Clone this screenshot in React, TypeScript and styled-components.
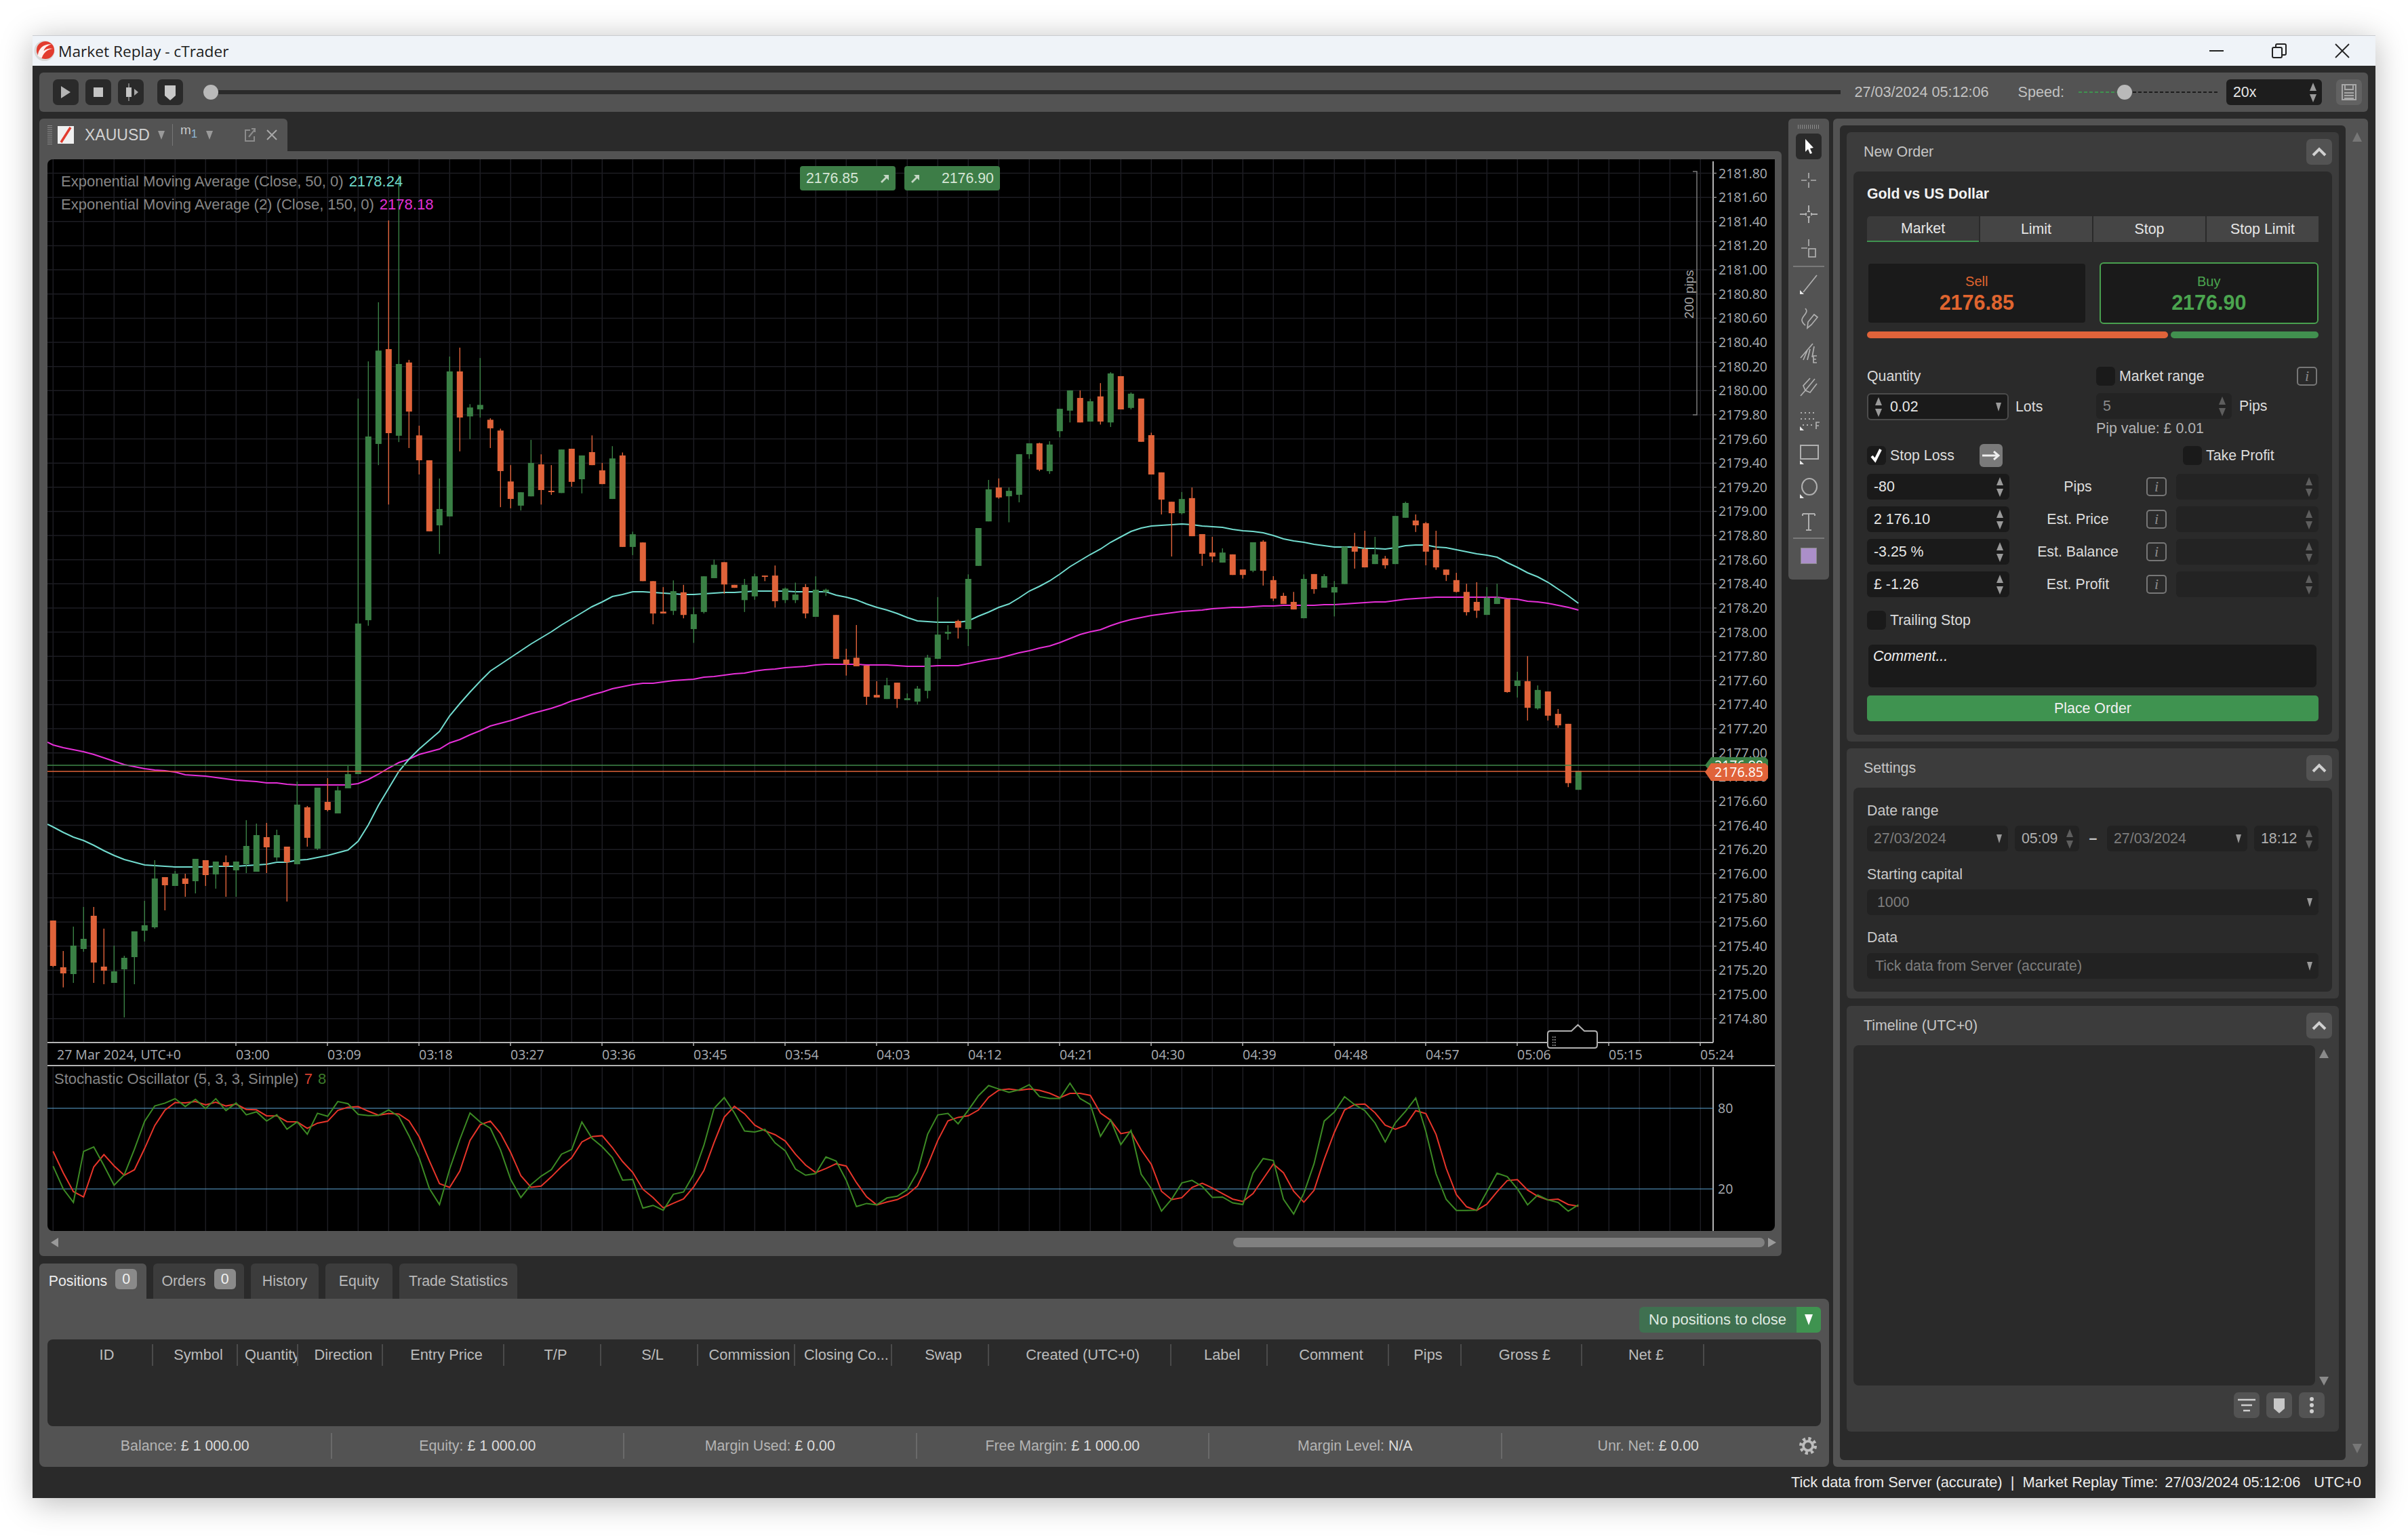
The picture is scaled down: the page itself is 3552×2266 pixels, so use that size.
import * as React from 'react';
import styled, { createGlobalStyle } from 'styled-components';

type Row = [number, number, number, number, number];

// up(1)/down(0), wick top, body top, body bottom, wick bottom, read off the chart at three scales
const rowsA: Row[] = [
  [0,774,774,975,980],[0,909,981,1008,1070],[1,801,885,1011,1050],[1,714,855,900,912],[0,714,753,960,1050],
  [0,810,978,996,1056],[1,885,999,1050,1050],[1,930,939,990,1203],[1,822,822,936,1056],[1,687,795,819,867],
  [1,507,588,804,810],[0,582,582,618,729],[1,555,567,621,621],[0,567,588,612,669],[1,501,501,600,654],
  [0,507,507,573,621],[1,513,513,570,633],[0,486,516,534,669],[1,513,513,552,669],[1,330,444,525,564],
  [1,345,396,558,558],[0,342,405,450,564],[1,372,396,495,510],[0,447,447,516,690],[1,159,261,525,525],
  [0,267,273,408,447],[1,186,186,456,462],[0,144,249,285,291],[1,180,198,300,300],[1,90,126,189,189],
];
const rowsB: Row[] = [
  [1,525,1130,1535,1535],[1,425,627,1121,1136],[1,266,396,647,704],[0,46,392,618,810],[1,-77,432,625,642],
  [0,421,428,560,658],[0,598,624,691,729],[0,691,691,882,882],[1,740,822,866,943],[1,412,452,842,842],
  [0,388,452,576,667],[1,540,549,573,634],[1,416,542,554,576],[0,578,582,605,658],[0,606,611,720,817],
  [0,704,748,795,820],[1,777,777,813,826],[1,636,698,788,788],[0,675,702,771,810],[0,704,773,776,784],
  [1,662,662,779,779],[0,660,660,749,762],[1,678,678,742,780],[0,624,669,704,704],[0,698,718,755,755],
  [1,653,686,795,795],[0,670,678,924,924],[1,883,890,924,946],[0,912,912,1016,1016],[0,1016,1016,1103,1132],
  [0,1032,1098,1103,1103],[1,1014,1043,1096,1107],[0,1026,1046,1107,1116],[1,1086,1105,1145,1182],[1,1003,1003,1099,1103],
  [1,958,972,1008,1008],[0,965,965,1025,1050],[0,1026,1026,1034,1034],[1,1010,1026,1067,1099],[1,996,1003,1057,1066],
  [0,1001,1001,1003,1016],[0,974,1001,1070,1087],[1,1033,1036,1067,1075],[1,1020,1052,1067,1075],[0,1024,1032,1103,1116],
  [1,1003,1039,1112,1112],[1,1036,1039,1045,1056],[0,1107,1107,1225,1225],[0,1198,1227,1240,1270],[0,1134,1222,1245,1245],
  [0,1243,1243,1327,1349],[0,1285,1322,1329,1329],[1,1276,1296,1333,1333],[0,1289,1289,1333,1357],[1,1318,1331,1336,1336],
  [1,1298,1305,1340,1348],
];
const rowsC: Row[] = [
  [1,1044,1053,1163,1188],[1,853,977,1057,1057],[1,946,968,974,994],[0,928,932,954,990],[1,778,793,959,1015],
  [1,625,625,750,750],[1,466,497,603,603],[0,461,491,524,528],[1,491,502,520,606],[1,381,381,515,540],
  [1,345,345,381,396],[0,343,345,432,437],[1,338,349,437,446],[1,231,231,305,325],[1,170,170,237,276],
  [0,170,195,276,276],[1,198,206,273,273],[0,146,190,273,283],[1,110,114,276,291],[0,123,123,233,233],
  [1,177,181,228,233],[0,197,197,340,340],[0,310,318,448,448],[0,441,441,531,580],[0,538,538,576,719],
  [1,506,529,576,580],[0,491,526,652,652],[0,645,645,710,750],[0,654,706,719,738],[1,692,706,739,739],
  [0,712,712,780,780],[0,762,762,780,792],[1,672,672,766,771],[0,665,670,766,815],[0,784,797,858,866],
  [0,839,849,876,876],[0,836,869,894,894],[1,778,793,923,923],[0,777,777,827,842],[1,777,784,822,822],
  [1,800,820,838,917],[1,687,687,810,810],[0,641,686,703,759],[0,634,694,755,755],[1,654,712,744,744],
  [0,717,726,748,759],[1,585,585,744,744],[1,538,542,591,591],[0,580,600,616,638],[0,605,609,703,748],
  [0,634,697,755,763],[0,762,762,780,800],[0,773,797,836,838],[0,809,836,903,914],[0,804,869,898,922],
  [1,820,855,912,912],[1,809,855,876,876],[0,860,860,1167,1169],[1,1100,1129,1147,1185],[0,1048,1131,1219,1261],
  [1,1145,1160,1221,1225],[0,1165,1165,1245,1261],[0,1223,1239,1277,1285],[0,1272,1272,1468,1481],[1,1427,1427,1490,1490],
];

const toPage = (rows: Row[], y0: number, k: number) =>
  rows.map(([up, high, top, bottom, low]) => ({
    up: up === 1,
    high: y0 + high / k,
    top: y0 + top / k,
    bottom: y0 + bottom / k,
    low: y0 + low / k,
  }));

const candles = [...toPage(rowsA, 1100, 3), ...toPage(rowsB, 300, 1.823), ...toPage(rowsC, 500, 2.24)];
const candleX = (i: number) => 78.3 + i * 15;

const ema50 = [
  1220,1228,1235,1240,1247,1255,1262,1268,1272,1276,1277,1278,1279,1279,1279,1279,1278,1278,1278,1277,1276,1275,1272,1272,1269,1268,1265,1262,1258,1254,
  1241,1217,1188,1163,1138,1120,1105,1092,1079,1056,1038,1021,1005,990,980,970,960,950,941,932,922,913,904,895,888,880,877,873,873,874,
  875,876,877,877,876,875,874,874,873,872,872,872,872,873,873,873,873,878,881,885,891,896,900,905,911,916,917,918,918,918,
  916,909,903,896,891,882,872,865,857,847,836,827,818,810,800,792,784,779,776,775,774,773,774,776,777,778,781,783,784,786,
  790,795,798,800,803,805,807,807,807,809,809,810,808,805,804,804,807,808,811,814,817,819,822,830,837,845,851,859,869,879,890,
];
const ema150 = [
  1099,1103,1106,1109,1113,1118,1123,1128,1131,1134,1136,1137,1139,1143,1144,1145,1147,1149,1151,1152,1153,1155,1155,1157,1158,1158,1158,1158,1158,1158,
  1156,1150,1142,1133,1125,1120,1113,1109,1105,1096,1091,1084,1078,1071,1067,1063,1058,1053,1049,1045,1040,1034,1030,1025,1021,1016,1013,1010,1008,1008,
  1006,1004,1003,1002,999,998,996,994,993,990,988,987,985,984,983,981,980,980,980,980,981,981,981,982,983,983,983,982,982,982,
  979,976,973,971,967,963,960,956,953,948,942,936,932,929,923,918,914,911,908,906,904,902,901,900,898,897,896,896,895,894,
  894,893,893,893,893,892,892,891,890,889,888,888,886,884,883,882,881,881,881,881,881,881,881,883,884,887,888,890,893,896,900,
];

const polyline = (ys: number[], startX?: number) => {
  const pts = ys.map((y, i) => `${candleX(i)},${y.toFixed(1)}`);
  if (startX !== undefined) pts.unshift(`${startX},${(ys[0] - 4).toFixed(1)}`);
  return pts.join(' ');
};

const sma = (v: number[], n: number) =>
  v.map((_, i) => {
    const part = v.slice(Math.max(0, i - n + 1), i + 1);
    return part.reduce((a, b) => a + b, 0) / part.length;
  });

// Stochastic (5, 3, 3), on screen y, so highest price is the smallest y
const rawK = candles.map((c, i) => {
  const win = candles.slice(Math.max(0, i - 4), i + 1);
  const top = Math.min(...win.map((w) => w.high));
  const bot = Math.max(...win.map((w) => w.low));
  const close = c.up ? c.top : c.bottom;
  return bot === top ? 50 : ((bot - close) / (bot - top)) * 100;
});
// the bars before the first visible one are not on screen, so the first values are set by hand
const stochK = sma(rawK, 3).map((v, i) => [37, 20, 10][i] ?? v);
const stochD = sma(stochK, 3).map((v, i) => [48, 32, 18, 14][i] ?? v);
const stochY = (v: number) => 1754 - ((v - 20) * 119) / 60;

const priceY = (p: number) => 255.6 + ((2181.8 - p) / 0.2) * 35.63;
const priceLevels = Array.from({ length: 36 }, (_, i) => 2181.8 - i * 0.2);
const gridX = Array.from({ length: 55 }, (_, i) => 78.3 + i * 45);
const timeLabels = ['03:00','03:09','03:18','03:27','03:36','03:45','03:54','04:03','04:12','04:21','04:30','04:39','04:48','04:57','05:06','05:15','05:24'];

const GlobalStyle = createGlobalStyle`
  html, body {
    margin: 0;
    padding: 0;
    background: #fff;
  }
  * {
    box-sizing: border-box;
  }
`;

const Page = styled.div`
  width: 3552px;
  height: 2266px;
  padding: 52px 48px 56px;
  overflow: hidden;
  background: #fff;
  font-family: 'Liberation Sans', Arial, sans-serif;
  font-size: 21.33px;
  color: #d8d8d8;
`;

const Window = styled.div`
  width: 3456px;
  height: 2158px;
  display: flex;
  flex-direction: column;
  background: #2a2a2a;
  box-shadow: 0 6px 44px rgba(0, 0, 0, 0.28);
`;

const TitleBar = styled.div`
  height: 45px;
  flex: none;
  display: flex;
  align-items: center;
  padding-left: 2px;
  background: #eff3f8;
  border-top: 1px solid #c9cbd0;
`;

const AppTitle = styled.span`
  margin-left: 4px;
  font-family: 'Open Sans', sans-serif;
  font-size: 22.7px;
  color: #1c1c1c;
`;

const WinControls = styled.div`
  margin-left: auto;
  display: flex;
  align-items: center;
  gap: 71px;
  padding-right: 38px;
`;

const Workspace = styled.div`
  height: 2067px;
  flex: none;
  display: flex;
  flex-direction: column;
  gap: 10px;
  padding: 10px 11px 0 10px;
`;

const ReplayBar = styled.div`
  height: 58px;
  flex: none;
  display: flex;
  align-items: center;
  padding: 0 9px 0 20px;
  background: #535353;
  border-radius: 6px;
`;

const IconButton = styled.div<{ $gapLeft?: number; $bg?: string }>`
  width: 38px;
  height: 38px;
  flex: none;
  display: flex;
  align-items: center;
  justify-content: center;
  margin-left: ${(p) => p.$gapLeft ?? 0}px;
  background: ${(p) => p.$bg ?? '#2a2a2a'};
  border-radius: 7px;
`;

const SeekTrack = styled.div`
  position: relative;
  flex: 1;
  height: 6px;
  margin-left: 30px;
  background: #2a2a2a;
`;

const SliderThumb = styled.span<{ $left: number }>`
  position: absolute;
  top: 50%;
  left: ${(p) => p.$left}px;
  width: 22px;
  height: 22px;
  margin-top: -11px;
  border-radius: 50%;
  background: #b9b9b9;
`;

const BarText = styled.span<{ $gapLeft: number }>`
  margin-left: ${(p) => p.$gapLeft}px;
  font-size: 21.6px;
  color: #c2c2c2;
  white-space: nowrap;
`;

const SpeedTrack = styled.div`
  position: relative;
  width: 207px;
  height: 2px;
  margin: 0 11px 0 21px;
  background: repeating-linear-gradient(90deg, #1d1d1d 0 5px, transparent 5px 8px);
`;

const SpeedFill = styled.span`
  position: absolute;
  left: 0;
  top: 0;
  width: 66px;
  height: 2px;
  background: repeating-linear-gradient(90deg, #3f9350 0 5px, transparent 5px 8px);
`;

const SpeedField = styled.div`
  width: 141px;
  height: 38px;
  display: flex;
  align-items: center;
  justify-content: space-between;
  padding: 0 8px 0 10px;
  background: #1d1d1d;
  border-radius: 6px;
  color: #e8e8e8;
`;

const MainRow = styled.div`
  height: 1989px;
  display: flex;
  gap: 6px;
`;

const LeftColumn = styled.div`
  width: 2640px;
  display: flex;
  flex-direction: column;
  gap: 11px;
`;

const ChartRow = styled.div`
  height: 1678px;
  flex: none;
  display: flex;
  gap: 10px;
`;

const ChartColumn = styled.div`
  width: 2570px;
  display: flex;
  flex-direction: column;
`;

const ChartTab = styled.div`
  width: 366px;
  height: 48px;
  flex: none;
  display: flex;
  align-items: center;
  padding-left: 12px;
  background: #535353;
  border-radius: 6px 6px 0 0;
  color: #d2d2d2;
`;

const Grip = styled.span`
  width: 7px;
  height: 28px;
  margin-right: 8px;
  background: repeating-linear-gradient(0deg, #8a8a8a 0 1px, transparent 1px 3px);
`;

const SymbolName = styled.span`
  margin-left: 16px;
  width: 108px;
  font-size: 23px;
`;

const TabSep = styled.span`
  width: 1px;
  height: 32px;
  margin: 0 11px 0 11px;
  background: #777;
`;

const Period = styled.span`
  width: 38px;
  font-size: 19px;
  line-height: 20px;
  color: #c8c8c8;
  transform: translateY(-4px);
`;

const PeriodSub = styled.sub`
  font-size: 17px;
  color: #8fb7d8;
`;

const TabAction = styled.svg<{ $left: number }>`
  margin-left: ${(p) => p.$left}px;
  flex: none;
`;

const ChartPanel = styled.div`
  flex: 1;
  display: flex;
  flex-direction: column;
  padding: 12px 10px 0 12px;
  background: #535353;
  border-radius: 0 6px 6px 6px;
`;

const ChartArea = styled.div`
  position: relative;
  height: 1581px;
  flex: none;
  background: #000;
  border-radius: 8px 0 8px 8px;
  overflow: hidden;
`;

const ChartSvg = styled.svg`
  display: block;
`;

const AxisText = styled.text`
  font-family: 'Open Sans', sans-serif;
  font-size: 19.5px;
  fill: #a9adb3;
`;

const TagText = styled.text`
  font-family: 'Open Sans', sans-serif;
  font-size: 19.5px;
  fill: #fff;
`;

const RulerText = styled.text`
  font-family: 'Liberation Sans', sans-serif;
  font-size: 19px;
  fill: #a4a4a4;
`;

const Legend = styled.div`
  position: absolute;
  left: 20px;
  top: 16px;
  line-height: 34px;
  font-size: 22px;
  color: #868686;
  white-space: nowrap;
`;

const LegendValue = styled.span<{ $color: string }>`
  margin-left: 8px;
  color: ${(p) => p.$color};
`;

const StochTitle = styled.div`
  position: absolute;
  left: 10px;
  top: 1345px;
  line-height: 24px;
  font-size: 22px;
  color: #868686;
  white-space: nowrap;
`;

const PriceBadges = styled.div`
  position: absolute;
  left: 1110px;
  top: 10px;
  display: flex;
  gap: 13px;
`;

const PriceBadge = styled.div`
  width: 141px;
  height: 36px;
  display: flex;
  align-items: center;
  justify-content: space-between;
  padding: 0 9px;
  background: #3d7d47;
  border-radius: 4px;
  color: #d6e6d6;
`;

const ScrollRow = styled.div`
  height: 37px;
  flex: none;
  display: flex;
  align-items: flex-start;
  margin-right: -2px;
  padding: 10px 0 0 5px;
`;

const ScrollThumb = styled.div`
  width: 784px;
  height: 14px;
  margin: 0 5px 0 auto;
  background: #808080;
  border-radius: 7px;
`;

const Tri = styled.span<{ $dir: 'up' | 'down' | 'left' | 'right'; $w?: number; $h?: number; $color?: string }>`
  display: inline-block;
  flex: none;
  width: 0;
  height: 0;
  border-style: solid;
  border-color: transparent;
  ${({ $dir, $w = 10, $h = 11, $color = '#9a9a9a' }) => {
    if ($dir === 'up') return `border-width: 0 ${$w / 2}px ${$h}px; border-bottom-color: ${$color};`;
    if ($dir === 'down') return `border-width: ${$h}px ${$w / 2}px 0; border-top-color: ${$color};`;
    if ($dir === 'left') return `border-width: ${$w / 2}px ${$h}px ${$w / 2}px 0; border-right-color: ${$color};`;
    return `border-width: ${$w / 2}px 0 ${$w / 2}px ${$h}px; border-left-color: ${$color};`;
  }}
`;

const SideBar = styled.div`
  width: 60px;
  height: 680px;
  flex: none;
  display: flex;
  flex-direction: column;
  align-items: center;
  padding-top: 9px;
  background: #535353;
  border-radius: 6px;
`;

const SideGrip = styled.span`
  width: 32px;
  height: 6px;
  margin-bottom: 7px;
  background: repeating-linear-gradient(90deg, #8a8a8a 0 1px, transparent 1px 3px);
`;

const ToolIcon = styled.div<{ $active?: boolean; $top?: number }>`
  width: 38px;
  height: 38px;
  flex: none;
  display: flex;
  align-items: center;
  justify-content: center;
  margin-top: ${(p) => p.$top ?? 12}px;
  background: ${(p) => (p.$active ? '#2a2a2a' : 'transparent')};
  border-radius: 6px;
`;

const ToolSep = styled.span<{ $top: number }>`
  width: 46px;
  height: 2px;
  flex: none;
  margin-top: ${(p) => p.$top}px;
  background: #7a7a7a;
`;

const ColorSwatch = styled.span`
  width: 24px;
  height: 24px;
  margin-top: 13px;
  background: #ab8fc9;
  border: 1px solid #8a8a8a;
`;

const BottomPanel = styled.div`
  flex: 1;
  display: flex;
  flex-direction: column;
`;

const BottomTabs = styled.div`
  height: 52px;
  flex: none;
  display: flex;
  gap: 10px;
`;

const BottomTab = styled.div<{ $active?: boolean; $w: number; $up?: boolean }>`
  width: ${(p) => p.$w}px;
  display: flex;
  align-items: ${(p) => (p.$up ? 'flex-start' : 'center')};
  justify-content: center;
  gap: 12px;
  padding-top: ${(p) => (p.$up ? 14 : 0)}px;
  background: ${(p) => (p.$active ? '#535353' : '#3c3c3c')};
  border-radius: 6px 6px 0 0;
  color: ${(p) => (p.$active ? '#ececec' : '#b9b9b9')};
`;

const CountBadge = styled.span`
  width: 32px;
  height: 30px;
  display: flex;
  align-items: center;
  justify-content: center;
  margin-top: -6px;
  background: #8a8a8a;
  border-radius: 6px;
  color: #f0f0f0;
`;

const BottomBody = styled.div`
  flex: 1;
  display: flex;
  flex-direction: column;
  padding-top: 12px;
  background: #535353;
  border-radius: 0 8px 8px 8px;
`;

const CloseRow = styled.div`
  height: 38px;
  flex: none;
  display: flex;
  justify-content: flex-end;
  margin: 0 12px 10px;
`;

const CloseButton = styled.div`
  width: 268px;
  display: flex;
  align-items: center;
  padding-left: 14px;
  background: #3f7050;
  border-radius: 6px;
  overflow: hidden;
  font-size: 22px;
  color: #dfe9e0;
`;

const CloseArrow = styled.span`
  width: 36px;
  height: 38px;
  display: flex;
  align-items: center;
  justify-content: center;
  margin-left: auto;
  background: #3f9350;
`;

const TableBox = styled.div`
  height: 128px;
  flex: none;
  margin: 0 12px;
  padding: 7px 0 0 21px;
  background: #2a2a2a;
  border-radius: 8px;
`;

const TableHead = styled.div`
  display: grid;
  grid-template-columns: 135px 125px 89px 125px 179px 143px 143px 143px 143px 143px 268.5px 142.5px 179px 107px 178px 180px;
  width: 2423px;
  height: 32px;
`;

const HeadCell = styled.div<{ $left?: boolean }>`
  height: 32px;
  line-height: 32px;
  overflow: hidden;
  white-space: nowrap;
  text-align: ${(p) => (p.$left ? 'left' : 'center')};
  padding-left: 10px;
  border-right: 2px solid #4a4a4a;
  font-size: 21.8px;
  color: #bcbcbc;

  &:first-child {
    padding-left: 0;
  }
`;

const StatsRow = styled.div`
  flex: 1;
  display: grid;
  grid-template-columns: repeat(6, 431.5px) 1fr;
  padding-top: 10px;
`;

const StatCell = styled.div<{ $last?: boolean }>`
  height: 38px;
  display: flex;
  align-items: center;
  justify-content: center;
  gap: 6px;
  border-right: ${(p) => (p.$last ? '0' : '2px solid #6a6a6a')};
  color: #b4b4b4;
  white-space: nowrap;
`;

const StatValue = styled.span`
  color: #dcdcdc;
`;

const GearCell = styled.div`
  height: 38px;
  display: flex;
  align-items: center;
  justify-content: center;
  padding-right: 12px;
`;

const OrderPanel = styled.div`
  width: 789px;
  display: flex;
  padding: 10px 0 10px 10px;
  background: #535353;
  border-radius: 6px;
`;

const OrderInner = styled.div`
  width: 746px;
  display: flex;
  flex-direction: column;
  gap: 10px;
  padding: 10px;
  background: #2a2a2a;
  border-radius: 6px;
`;

const OrderScroll = styled.div`
  flex: 1;
  display: flex;
  flex-direction: column;
  align-items: center;
  justify-content: space-between;
  padding: 10px 0 10px;
`;

const Section = styled.div<{ $h: number; $top?: number }>`
  height: ${(p) => p.$h}px;
  flex: none;
  display: flex;
  flex-direction: column;
  margin-top: ${(p) => p.$top ?? 0}px;
  background: #3c3c3c;
  border-radius: 6px;
`;

const SectionHead = styled.div`
  height: 58px;
  flex: none;
  display: flex;
  align-items: center;
  justify-content: space-between;
  padding: 0 10px 0 25px;
  color: #c6c6c6;
`;

const Collapse = styled.div`
  width: 38px;
  height: 38px;
  display: flex;
  align-items: center;
  justify-content: center;
  background: #535353;
  border-radius: 7px;
`;

const Card = styled.div`
  flex: 1;
  margin: 0 10px 10px;
  padding: 0 20px;
  background: #2a2a2a;
  border-radius: 8px;
`;

const CardTitle = styled.div`
  height: 66px;
  line-height: 66px;
  font-weight: 700;
  color: #f2f2f2;
`;

const OrderTabs = styled.div`
  display: grid;
  grid-template-columns: repeat(4, 1fr);
  gap: 2px;
  height: 38px;
`;

const OrderTab = styled.div<{ $active?: boolean }>`
  display: flex;
  align-items: center;
  justify-content: center;
  background: ${(p) => (p.$active ? '#3a3a3a' : '#454545')};
  border-bottom: ${(p) => (p.$active ? '2px solid #3f9350' : '0')};
  border-radius: ${(p) => (p.$active ? '5px 0 0 0' : '0')};
  color: #e6e6e6;
`;

const PriceRow = styled.div`
  display: grid;
  grid-template-columns: 1fr 1fr;
  gap: 19px;
  height: 91px;
  margin-top: 30px;
`;

const PriceBox = styled.div<{ $color: string; $selected?: boolean }>`
  display: flex;
  flex-direction: column;
  align-items: center;
  justify-content: center;
  background: #1a1a1a;
  background-clip: padding-box;
  border: 2px solid ${(p) => (p.$selected ? '#49a04f' : 'transparent')};
  border-radius: 6px;
  color: ${(p) => p.$color};
`;

const PriceCaption = styled.span`
  line-height: 26px;
  font-size: 20px;
`;

const PriceValue = styled.span`
  line-height: 36px;
  font-size: 30.5px;
  font-weight: 700;
`;

const RatioBar = styled.div`
  display: flex;
  gap: 4px;
  height: 10px;
  margin-top: 11px;
`;

const RatioPart = styled.span<{ $grow: number; $color: string }>`
  flex: ${(p) => p.$grow};
  background: ${(p) => p.$color};
  border-radius: 5px;
`;

const QtyGrid = styled.div`
  display: grid;
  grid-template-columns: 338px 1fr;
  margin-top: 42px;
  height: 106px;
`;

const FieldLabel = styled.div`
  height: 29px;
  line-height: 29px;
  color: #d8d8d8;
`;

const FlexLine = styled.div<{ $top?: number }>`
  display: flex;
  align-items: center;
  margin-top: ${(p) => p.$top ?? 0}px;
`;

const Check = styled.span`
  width: 28px;
  height: 28px;
  flex: none;
  display: flex;
  align-items: center;
  justify-content: center;
  background: #1a1a1a;
  border-radius: 6px;
`;

const CheckText = styled.span<{ $w?: number }>`
  margin-left: 6px;
  width: ${(p) => (p.$w ? `${p.$w}px` : 'auto')};
  color: #dcdcdc;
  white-space: nowrap;
`;

const InfoBox = styled.span<{ $pushed?: boolean; $right?: number }>`
  width: 30px;
  height: 28px;
  flex: none;
  display: flex;
  align-items: center;
  justify-content: center;
  margin-left: ${(p) => (p.$pushed ? 'auto' : '0')};
  margin-right: ${(p) => p.$right ?? 0}px;
  border: 2px solid #777;
  border-radius: 5px;
  font-family: 'Liberation Serif', serif;
  font-style: italic;
  font-size: 22px;
  color: #8a8a8a;
`;

const Field = styled.div<{ $w?: number; $bg?: string; $color?: string; $border?: boolean; $h?: number }>`
  width: ${(p) => (p.$w ? `${p.$w}px` : '100%')};
  height: ${(p) => p.$h ?? 38}px;
  flex: none;
  display: flex;
  align-items: center;
  justify-content: space-between;
  padding: 0 9px 0 10px;
  background: ${(p) => p.$bg ?? '#1a1a1a'};
  border: ${(p) => (p.$border ? '2px solid #4c4c4c' : '0')};
  border-radius: 6px;
  color: ${(p) => p.$color ?? '#e6e6e6'};
  white-space: nowrap;
`;

const Spin = styled.span<{ $dim?: boolean }>`
  display: flex;
  flex-direction: column;
  gap: 5px;
  flex: none;
  opacity: ${(p) => (p.$dim ? 0.5 : 1)};
`;

const QtyText = styled.span`
  margin-left: 12px;
  margin-right: auto;
`;

const SideLabel = styled.span<{ $left: number }>`
  margin-left: ${(p) => p.$left}px;
  color: #dcdcdc;
`;

const PipValue = styled.div`
  height: 28px;
  line-height: 28px;
  color: #b4b4b4;
`;

const StopRow = styled.div`
  display: grid;
  grid-template-columns: 466px 1fr;
  height: 34px;
  margin-top: 8px;
`;

const ArrowButton = styled.span`
  width: 34px;
  height: 34px;
  display: flex;
  align-items: center;
  justify-content: center;
  background: #7a7a7a;
  border-radius: 6px;
`;

const ProtectRow = styled.div`
  display: flex;
  align-items: center;
  height: 38px;
  margin-top: 10px;
`;

const ProtectLabel = styled.span`
  width: 202px;
  text-align: center;
  color: #dcdcdc;
`;

const CommentBox = styled.div`
  height: 63px;
  margin: 22px 3px 0 2px;
  padding: 5px 7px;
  background: #1a1a1a;
  border-radius: 6px;
  font-style: italic;
  color: #ececec;
`;

const PlaceOrder = styled.div`
  height: 38px;
  margin-top: 12px;
  display: flex;
  align-items: center;
  justify-content: center;
  background: #3f9350;
  border-radius: 5px;
  color: #f0f0f0;
`;

const SettingLabel = styled.div<{ $top: number }>`
  height: 34px;
  line-height: 34px;
  margin-top: ${(p) => p.$top}px;
  color: #c8c8c8;
`;

const DateLine = styled.div`
  display: flex;
  align-items: center;
  margin-top: 5px;
`;

const DateDash = styled.span`
  width: 41px;
  text-align: center;
  font-weight: 700;
  color: #c8c8c8;
`;

const Spacer = styled.span`
  width: 10px;
  flex: none;
`;

const SelectField = styled(Field)<{ $top: number; $pad: number }>`
  margin-top: ${(p) => p.$top}px;
  padding-left: ${(p) => p.$pad}px;
`;

const TimelineBody = styled.div`
  height: 502px;
  flex: none;
  display: flex;
  margin: 0 10px;
`;

const TimelineList = styled.div`
  width: 681px;
  background: #2a2a2a;
  border-radius: 8px;
`;

const TimelineScroll = styled.div`
  flex: 1;
  display: flex;
  flex-direction: column;
  align-items: center;
  justify-content: space-between;
  padding: 6px 0 0 0;
`;

const TimelineFoot = styled.div`
  display: flex;
  justify-content: flex-end;
  gap: 10px;
  margin: 10px 21px 0 0;
`;

const StatusBar = styled.div`
  height: 46px;
  flex: none;
  display: flex;
  align-items: center;
  justify-content: flex-end;
  gap: 10px;
  padding-right: 21px;
  font-size: 21.8px;
  color: #ececec;
  white-space: nowrap;
`;

const StatusTime = styled.span`
  margin-right: 10px;
`;

const Logo = () => (
  <svg width="32" height="34" viewBox="0 0 33 34">
    <circle cx="16" cy="17" r="15.5" fill="#d9d9d9" />
    <circle cx="17.5" cy="16" r="13.5" fill="#e23b2e" />
    <path d="M6 24C7 13 15 6 27 7 20 9 16 13 15 17 21 13 25 13 29 14 22 14 15 19 12 28 9 27 7 26 6 24Z" fill="#fff" opacity="0.92" />
  </svg>
);

const ReplayGlyph = ({ kind }: { kind: 'play' | 'stop' | 'step' | 'mark' }) => (
  <svg width="26" height="30" viewBox="0 0 26 30">
    {kind === 'play' && <path d="M6 6 20 15 6 24Z" fill="#b4b4b4" />}
    {kind === 'stop' && <rect x="6" y="8" width="14" height="14" fill="#c4c4c4" />}
    {kind === 'step' && (
      <g fill="#c4c4c4">
        <rect x="6" y="8" width="8" height="14" />
        <rect x="9.5" y="2" width="1" height="26" />
        <path d="M18 10 24 15 18 20Z" fill="#a8a8a8" />
      </g>
    )}
    {kind === 'mark' && <path d="M5 5H21V20L13 27 5 20Z" fill="#c8c8c8" />}
  </svg>
);

const SaveGlyph = () => (
  <svg width="24" height="26" viewBox="0 0 24 26" fill="none" stroke="#a8a8a8" strokeWidth="2">
    <rect x="2" y="2" width="20" height="22" />
    <path d="M6 3V9H18V3" />
    <path d="M5 14H19M5 18H19M5 22H19" />
  </svg>
);

const ChevronUp = () => (
  <svg width="22" height="16" viewBox="0 0 22 16" fill="none" stroke="#d0d0d0" strokeWidth="4">
    <path d="M2 13 11 4 20 13" />
  </svg>
);

const Tool = ({ name }: { name: string }) => (
  <svg width="38" height="38" viewBox="0 0 38 38" fill="none" stroke="#b0b0b0" strokeWidth="1.7">
    {name === 'cursor' && <path d="M14 8V27L18 23 21 30 24 29 21 22 26 21Z" fill="#fff" stroke="none" />}
    {name === 'cross' && <path d="M19 8V16M19 22V30M8 19H16M22 19H30" />}
    {name === 'crossBold' && <path d="M19 6V14M19 24V32M6 19H14M24 19H32M17 15H21M17 23H21M15 17V21M23 17V21" strokeWidth="2" />}
    {name === 'crossBox' && (
      <>
        <path d="M19 6V16M8 19H17" />
        <rect x="19" y="20" width="10" height="12" />
      </>
    )}
    {name === 'line' && (
      <>
        <path d="M31 5 11 30" />
        <path d="M6 33V27L12 33Z" fill="#e8e8e8" stroke="none" />
      </>
    )}
    {name === 'pen' && (
      <>
        <path d="M14 4C20 10 9 15 9 21 9 25 12 27 14 29" />
        <path d="M17 33 18 24 27 13 32 17 23 28Z" />
      </>
    )}
    {name === 'fibFan' && (
      <>
        <path d="M7 27 25 6M11 30 17 16M17 30 21 14M24 26 27 10" />
        <path d="M31 24H26V34H31M26 29H30" />
      </>
    )}
    {name === 'fork' && <path d="M7 33 14 25M14 25 28 8M14 25 11 18 21 7M14 25 21 28 31 15" />}
    {name === 'fibLevels' && (
      <>
        <path d="M7 8H31M7 17H31M10 26H26" strokeDasharray="2 4" strokeWidth="2" />
        <path d="M30 32V22H35M30 27H34" />
        <path d="M6 34V28L12 34Z" fill="#e8e8e8" stroke="none" />
      </>
    )}
    {name === 'rect' && (
      <>
        <rect x="7" y="6" width="26" height="20" strokeWidth="2" />
        <path d="M6 34V28L12 34Z" fill="#e8e8e8" stroke="none" />
      </>
    )}
    {name === 'circle' && (
      <>
        <ellipse cx="20" cy="17" rx="11" ry="12" strokeWidth="2" />
        <path d="M6 34V28L12 34Z" fill="#e8e8e8" stroke="none" />
      </>
    )}
    {name === 'text' && <path d="M10 7H28M10 7V10M28 7V10M19 7V31M15 31H23" strokeWidth="2" />}
  </svg>
);

const PriceChart = () => (
  <ChartSvg width="2548" height="1581" viewBox="70 235 2548 1581">
    {gridX.map((x) => (
      <g key={x}>
        <line x1={x} x2={x} y1={235} y2={1538} stroke="#1d1d23" strokeWidth="1.5" />
        <line x1={x} x2={x} y1={1574} y2={1816} stroke="#1d1d23" strokeWidth="1.5" />
      </g>
    ))}
    {priceLevels.map((p) => (
      <line key={p} x1={70} x2={2527} y1={priceY(p)} y2={priceY(p)} stroke="#1d1d23" strokeWidth="1.5" />
    ))}
    <polyline points={polyline(ema150, 70)} fill="none" stroke="#e62fd8" strokeWidth="2" />
    <polyline points={polyline(ema50, 70)} fill="none" stroke="#72dccf" strokeWidth="2" />
    {candles.map((c, i) => {
      const color = c.up ? '#3a8045' : '#e0633a';
      const x = candleX(i);
      return (
        <g key={i}>
          <rect x={x - 0.7} y={c.high} width="1.4" height={c.low - c.high} fill={color} />
          <rect x={x - 4.5} y={c.top} width="9" height={Math.max(c.bottom - c.top, 2)} fill={color} />
        </g>
      );
    })}
    <path d="M2497 253H2503V612H2497" fill="none" stroke="#7a7a7a" strokeWidth="1.5" />
    <RulerText transform="translate(2498 470) rotate(-90)">200 pips</RulerText>
    <line x1={70} x2={2520} y1={1129} y2={1129} stroke="#3f8a4a" strokeWidth="1.5" />
    <line x1={70} x2={2520} y1={1138} y2={1138} stroke="#e0633a" strokeWidth="1.5" />
    <line x1={2527} x2={2527} y1={238} y2={1538} stroke="#b4b4b4" strokeWidth="2" />
    <line x1={70} x2={2527} y1={1538} y2={1538} stroke="#b4b4b4" strokeWidth="2" />
    {priceLevels.map((p) => (
      <g key={p}>
        <line x1={2527} x2={2532} y1={priceY(p)} y2={priceY(p)} stroke="#8a8a8a" strokeWidth="1.5" />
        <AxisText x={2535} y={priceY(p) + 7}>{p.toFixed(2)}</AxisText>
      </g>
    ))}
    <path d="M2524 1117H2604L2608 1121V1140H2524L2515 1129Z" fill="#3a8045" />
    <TagText x={2529} y={1136}>2176.90</TagText>
    <path d="M2524 1126H2604L2608 1130V1148L2604 1152H2524L2515 1139Z" fill="#e0633a" />
    <TagText x={2529} y={1146}>2176.85</TagText>
    <AxisText x={84} y={1563}>27 Mar 2024, UTC+0</AxisText>
    {timeLabels.map((t, i) => (
      <g key={t}>
        <line x1={348 + i * 135} x2={348 + i * 135} y1={1538} y2={1543} stroke="#b4b4b4" strokeWidth="1.5" />
        <AxisText x={348 + i * 135} y={1563}>{t}</AxisText>
      </g>
    ))}
    <path
      d="M2287 1521H2318L2327.5 1512 2337 1521H2352Q2356 1521 2356 1525V1542Q2356 1546 2352 1546H2287Q2283 1546 2283 1542V1525Q2283 1521 2287 1521Z"
      fill="#000"
      stroke="#b0b0b0"
      strokeWidth="2"
    />
    <path d="M2290 1530H2296M2290 1534H2296M2290 1538H2296M2290 1542H2296" stroke="#9a9a9a" strokeWidth="2" strokeDasharray="1 1" />
    <line x1={70} x2={2618} y1={1572} y2={1572} stroke="#b4b4b4" strokeWidth="2" />
    <line x1={2527} x2={2527} y1={1574} y2={1816} stroke="#b4b4b4" strokeWidth="2" />
    <line x1={70} x2={2527} y1={1635} y2={1635} stroke="#5fa8d8" strokeWidth="1.2" />
    <line x1={70} x2={2527} y1={1754} y2={1754} stroke="#5fa8d8" strokeWidth="1.2" />
    <polyline points={polyline(stochD.map(stochY))} fill="none" stroke="#e8352a" strokeWidth="2" />
    <polyline points={polyline(stochK.map(stochY))} fill="none" stroke="#3c8a24" strokeWidth="2" />
    <AxisText x={2534} y={1642}>80</AxisText>
    <AxisText x={2534} y={1761}>20</AxisText>
  </ChartSvg>
);

const protectRows = [
  { value: '-80', label: 'Pips' },
  { value: '2 176.10', label: 'Est. Price' },
  { value: '-3.25 %', label: 'Est. Balance' },
  { value: '£ -1.26', label: 'Est. Profit' },
];

const headCols = ['ID', 'Symbol', 'Quantity', 'Direction', 'Entry Price', 'T/P', 'S/L', 'Commission', 'Closing Co...', 'Swap', 'Created (UTC+0)', 'Label', 'Comment', 'Pips', 'Gross £', 'Net £'];

const stats = [
  ['Balance:', '£ 1 000.00'],
  ['Equity:', '£ 1 000.00'],
  ['Margin Used:', '£ 0.00'],
  ['Free Margin:', '£ 1 000.00'],
  ['Margin Level:', 'N/A'],
  ['Unr. Net:', '£ 0.00'],
];

const SpinArrows = ({ dim }: { dim?: boolean }) => (
  <Spin $dim={dim}>
    <Tri $dir="up" $h={12} />
    <Tri $dir="down" $h={12} />
  </Spin>
);

const App = () => (
  <Page>
    <GlobalStyle />
    <Window>
      <TitleBar>
        <Logo />
        <AppTitle>Market Replay - cTrader</AppTitle>
        <WinControls>
          <svg width="21" height="4" viewBox="0 0 21 4"><path d="M0 2H21" stroke="#222" strokeWidth="2" /></svg>
          <svg width="22" height="22" viewBox="0 0 22 22" fill="none" stroke="#222" strokeWidth="2">
            <rect x="1" y="6" width="14" height="15" rx="2" />
            <path d="M6 5V3Q6 1 8 1H19Q21 1 21 3V15Q21 17 19 17H16" />
          </svg>
          <svg width="22" height="22" viewBox="0 0 22 22" fill="none" stroke="#222" strokeWidth="1.8"><path d="M1 1 21 21M21 1 1 21" /></svg>
        </WinControls>
      </TitleBar>
      <Workspace>
        <ReplayBar>
          <IconButton><ReplayGlyph kind="play" /></IconButton>
          <IconButton $gapLeft={10}><ReplayGlyph kind="stop" /></IconButton>
          <IconButton $gapLeft={10}><ReplayGlyph kind="step" /></IconButton>
          <IconButton $gapLeft={20}><ReplayGlyph kind="mark" /></IconButton>
          <SeekTrack><SliderThumb $left={0} /></SeekTrack>
          <BarText $gapLeft={20}>27/03/2024 05:12:06</BarText>
          <BarText $gapLeft={43}>Speed:</BarText>
          <SpeedTrack>
            <SpeedFill />
            <SliderThumb $left={57} />
          </SpeedTrack>
          <SpeedField>
            20x
            <SpinArrows />
          </SpeedField>
          <IconButton $gapLeft={21} $bg="#626262"><SaveGlyph /></IconButton>
        </ReplayBar>
        <MainRow>
          <LeftColumn>
            <ChartRow>
              <ChartColumn>
                <ChartTab>
                  <Grip />
                  <svg width="24" height="26" viewBox="0 0 24 26">
                    <rect width="24" height="26" fill="#f0f0f0" />
                    <path d="M5 24 19 2" stroke="#e23b2e" strokeWidth="3.5" />
                  </svg>
                  <SymbolName>XAUUSD</SymbolName>
                  <Tri $dir="down" $h={13} $w={10} />
                  <TabSep />
                  <Period>m<PeriodSub>1</PeriodSub></Period>
                  <Tri $dir="down" $h={13} $w={10} />
                  <TabAction $left={46} width="18" height="22" viewBox="0 0 18 22" fill="none" stroke="#8c8c8c" strokeWidth="2">
                    <path d="M9 4H2V20H15V13M7 14 16 3M11 2H16V7" />
                  </TabAction>
                  <TabAction $left={14} width="18" height="18" viewBox="0 0 18 18" fill="none" stroke="#a8a8a8" strokeWidth="2">
                    <path d="M2 2 16 16M16 2 2 16" />
                  </TabAction>
                </ChartTab>
                <ChartPanel>
                  <ChartArea>
                    <PriceChart />
                    <Legend>
                      <div>Exponential Moving Average (Close, 50, 0)<LegendValue $color="#6fd8c8">2178.24</LegendValue></div>
                      <div>Exponential Moving Average (2) (Close, 150, 0)<LegendValue $color="#e030d8">2178.18</LegendValue></div>
                    </Legend>
                    <PriceBadges>
                      <PriceBadge>
                        2176.85
                        <svg width="14" height="14" viewBox="0 0 14 14"><path d="M1 12 8 5 5 2H13V10L10 7 3 14Z" fill="#c4d6c4" /></svg>
                      </PriceBadge>
                      <PriceBadge>
                        <svg width="14" height="14" viewBox="0 0 14 14"><path d="M1 12 8 5 5 2H13V10L10 7 3 14Z" fill="#c4d6c4" /></svg>
                        2176.90
                      </PriceBadge>
                    </PriceBadges>
                    <StochTitle>
                      Stochastic Oscillator (5, 3, 3, Simple)
                      <LegendValue $color="#d8402f">7</LegendValue>
                      <LegendValue $color="#3c7a2a">8</LegendValue>
                    </StochTitle>
                  </ChartArea>
                  <ScrollRow>
                    <Tri $dir="left" $w={14} $h={11} />
                    <ScrollThumb />
                    <Tri $dir="right" $w={14} $h={12} />
                  </ScrollRow>
                </ChartPanel>
              </ChartColumn>
              <SideBar>
                <SideGrip />
                <ToolIcon $active $top={0}><Tool name="cursor" /></ToolIcon>
                <ToolIcon><Tool name="cross" /></ToolIcon>
                <ToolIcon><Tool name="crossBold" /></ToolIcon>
                <ToolIcon><Tool name="crossBox" /></ToolIcon>
                <ToolSep $top={7} />
                <ToolIcon $top={7}><Tool name="line" /></ToolIcon>
                <ToolIcon><Tool name="pen" /></ToolIcon>
                <ToolIcon><Tool name="fibFan" /></ToolIcon>
                <ToolIcon><Tool name="fork" /></ToolIcon>
                <ToolIcon><Tool name="fibLevels" /></ToolIcon>
                <ToolIcon><Tool name="rect" /></ToolIcon>
                <ToolIcon><Tool name="circle" /></ToolIcon>
                <ToolIcon><Tool name="text" /></ToolIcon>
                <ToolSep $top={4} />
                <ColorSwatch />
              </SideBar>
            </ChartRow>
            <BottomPanel>
              <BottomTabs>
                <BottomTab $active $w={158}>Positions <CountBadge>0</CountBadge></BottomTab>
                <BottomTab $w={134}>Orders <CountBadge>0</CountBadge></BottomTab>
                <BottomTab $w={100} $up>History</BottomTab>
                <BottomTab $w={99} $up>Equity</BottomTab>
                <BottomTab $w={174} $up>Trade Statistics</BottomTab>
              </BottomTabs>
              <BottomBody>
                <CloseRow>
                  <CloseButton>
                    No positions to close
                    <CloseArrow><Tri $dir="down" $w={13} $h={16} $color="#fff" /></CloseArrow>
                  </CloseButton>
                </CloseRow>
                <TableBox>
                  <TableHead>
                    {headCols.map((c) => (
                      <HeadCell key={c} $left={c === 'Quantity'}>{c}</HeadCell>
                    ))}
                  </TableHead>
                </TableBox>
                <StatsRow>
                  {stats.map(([k, v], i) => (
                    <StatCell key={k} $last={i === 5}>
                      {k} <StatValue>{v}</StatValue>
                    </StatCell>
                  ))}
                  <GearCell>
                    <svg width="26" height="28" viewBox="0 0 28 30" fill="none" stroke="#bdbdbd">
                      <circle cx="14" cy="15" r="7.5" strokeWidth="4" />
                      <circle cx="14" cy="15" r="11.5" strokeWidth="5" strokeDasharray="4.5 4.53" />
                    </svg>
                  </GearCell>
                </StatsRow>
              </BottomBody>
            </BottomPanel>
          </LeftColumn>
          <OrderPanel>
            <OrderInner>
              <Section $h={899}>
                <SectionHead>New Order<Collapse><ChevronUp /></Collapse></SectionHead>
                <Card>
                  <CardTitle>Gold vs US Dollar</CardTitle>
                  <OrderTabs>
                    <OrderTab $active>Market</OrderTab>
                    <OrderTab>Limit</OrderTab>
                    <OrderTab>Stop</OrderTab>
                    <OrderTab>Stop Limit</OrderTab>
                  </OrderTabs>
                  <PriceRow>
                    <PriceBox $color="#e0652f">
                      <PriceCaption>Sell</PriceCaption>
                      <PriceValue>2176.85</PriceValue>
                    </PriceBox>
                    <PriceBox $color="#4ba54f" $selected>
                      <PriceCaption>Buy</PriceCaption>
                      <PriceValue>2176.90</PriceValue>
                    </PriceBox>
                  </PriceRow>
                  <RatioBar>
                    <RatioPart $grow={444} $color="#e0633a" />
                    <RatioPart $grow={218} $color="#41904f" />
                  </RatioBar>
                  <QtyGrid>
                    <div>
                      <FieldLabel>Quantity</FieldLabel>
                      <FlexLine $top={10}>
                        <Field $w={209} $h={40} $border>
                          <SpinArrows />
                          <QtyText>0.02</QtyText>
                          <Tri $dir="down" $w={9} $h={13} />
                        </Field>
                        <SideLabel $left={10}>Lots</SideLabel>
                      </FlexLine>
                    </div>
                    <div>
                      <FlexLine>
                        <Check />
                        <CheckText>Market range</CheckText>
                        <InfoBox $pushed $right={2}>i</InfoBox>
                      </FlexLine>
                      <FlexLine $top={11}>
                        <Field $w={200} $bg="#232323" $color="#8a8a8a">5<SpinArrows dim /></Field>
                        <SideLabel $left={11}>Pips</SideLabel>
                      </FlexLine>
                      <PipValue>Pip value: £ 0.01</PipValue>
                    </div>
                  </QtyGrid>
                  <StopRow>
                    <FlexLine>
                      <Check>
                        <svg width="20" height="22" viewBox="0 0 20 22" fill="none" stroke="#fff" strokeWidth="4"><path d="M3 12 8 18 16 2" /></svg>
                      </Check>
                      <CheckText $w={132}>Stop Loss</CheckText>
                      <ArrowButton>
                        <svg width="26" height="14" viewBox="0 0 26 14" fill="none" stroke="#eee" strokeWidth="3"><path d="M0 7H23M17 1 24 7 17 13" /></svg>
                      </ArrowButton>
                    </FlexLine>
                    <FlexLine>
                      <Check />
                      <CheckText>Take Profit</CheckText>
                    </FlexLine>
                  </StopRow>
                  {protectRows.map((r) => (
                    <ProtectRow key={r.label}>
                      <Field $w={210}>{r.value}<SpinArrows /></Field>
                      <ProtectLabel>{r.label}</ProtectLabel>
                      <InfoBox $right={14}>i</InfoBox>
                      <Field $w={210} $bg="#232323"><span /><SpinArrows dim /></Field>
                    </ProtectRow>
                  ))}
                  <FlexLine $top={20}>
                    <Check />
                    <CheckText>Trailing Stop</CheckText>
                  </FlexLine>
                  <CommentBox>Comment...</CommentBox>
                  <PlaceOrder>Place Order</PlaceOrder>
                </Card>
              </Section>
              <Section $h={369}>
                <SectionHead>Settings<Collapse><ChevronUp /></Collapse></SectionHead>
                <Card>
                  <SettingLabel $top={17}>Date range</SettingLabel>
                  <DateLine>
                    <Field $w={208} $bg="#222" $color="#7e7e7e">27/03/2024<Tri $dir="down" $w={9} $h={13} /></Field>
                    <Spacer />
                    <Field $w={95} $bg="#222" $color="#b0b0b0">05:09<SpinArrows dim /></Field>
                    <DateDash>–</DateDash>
                    <Field $w={207} $bg="#222" $color="#7e7e7e">27/03/2024<Tri $dir="down" $w={9} $h={13} /></Field>
                    <Spacer />
                    <Field $w={95} $bg="#222" $color="#b0b0b0">18:12<SpinArrows dim /></Field>
                  </DateLine>
                  <SettingLabel $top={17}>Starting capital</SettingLabel>
                  <SelectField $top={5} $pad={15} $bg="#222" $color="#7e7e7e">1000<Tri $dir="down" $w={9} $h={13} /></SelectField>
                  <SettingLabel $top={16}>Data</SettingLabel>
                  <SelectField $top={6} $pad={12} $bg="#222" $color="#7e7e7e">Tick data from Server (accurate)<Tri $dir="down" $w={9} $h={13} /></SelectField>
                </Card>
              </Section>
              <Section $h={628} $top={1}>
                <SectionHead>Timeline (UTC+0)<Collapse><ChevronUp /></Collapse></SectionHead>
                <TimelineBody>
                  <TimelineList />
                  <TimelineScroll>
                    <Tri $dir="up" $w={14} $h={13} $color="#8a8a8a" />
                    <Tri $dir="down" $w={14} $h={13} $color="#8a8a8a" />
                  </TimelineScroll>
                </TimelineBody>
                <TimelineFoot>
                  <IconButton $bg="#535353">
                    <svg width="26" height="24" viewBox="0 0 26 24" stroke="#cfcfcf" strokeWidth="2.5">
                      <path d="M0 4H26M5 12H21M8 20H18" />
                    </svg>
                  </IconButton>
                  <IconButton $bg="#535353"><ReplayGlyph kind="mark" /></IconButton>
                  <IconButton $bg="#535353">
                    <svg width="8" height="26" viewBox="0 0 8 26" fill="#cfcfcf">
                      <circle cx="4" cy="4" r="3" /><circle cx="4" cy="13" r="3" /><circle cx="4" cy="22" r="3" />
                    </svg>
                  </IconButton>
                </TimelineFoot>
              </Section>
            </OrderInner>
            <OrderScroll>
              <Tri $dir="up" $w={14} $h={14} $color="#777" />
              <Tri $dir="down" $w={14} $h={14} $color="#777" />
            </OrderScroll>
          </OrderPanel>
        </MainRow>
      </Workspace>
      <StatusBar>
        <span>Tick data from Server (accurate)&nbsp; |&nbsp; Market Replay Time:</span>
        <StatusTime>27/03/2024 05:12:06</StatusTime>
        <span>UTC+0</span>
      </StatusBar>
    </Window>
  </Page>
);

export default App;
